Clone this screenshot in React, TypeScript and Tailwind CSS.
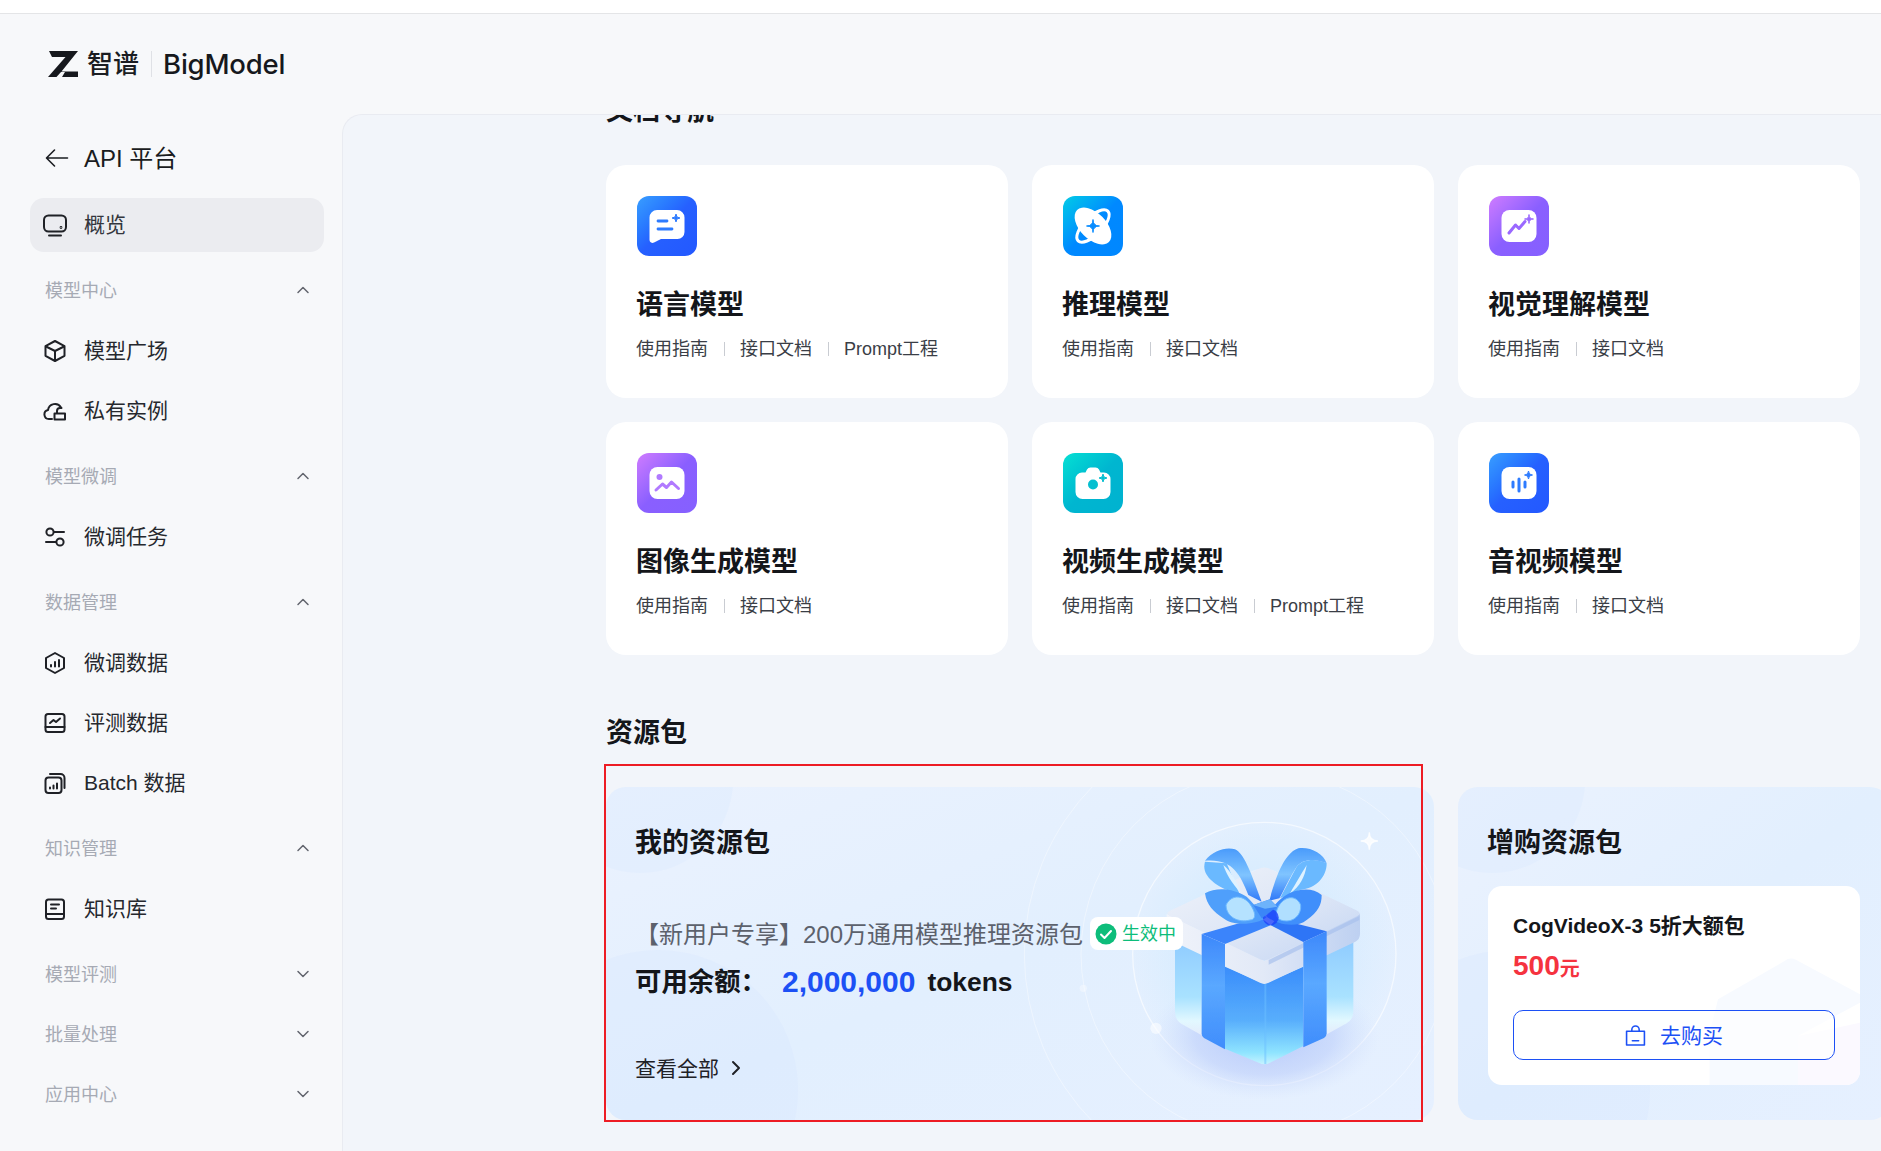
import { ChevronDown, ChevronRight, ChevronUp } from 'lucide-react';
import type { ReactNode } from 'react';

type NavItem = { label: string; icon: ReactNode };
type NavGroup = { title: string; open: boolean; items: NavItem[] };

function star(x: number, y: number, r: number) {
  return `M${x} ${y - r}Q${x} ${y} ${x + r} ${y}Q${x} ${y} ${x} ${y + r}Q${x} ${y} ${x - r} ${y}Q${x} ${y} ${x} ${y - r}Z`;
}

function NavIcon({ children }: { children: ReactNode }) {
  return (
    <svg viewBox="0 0 24 24" className="h-6 w-6 shrink-0" fill="none" stroke="#1f2126" strokeWidth="2" strokeLinecap="round" strokeLinejoin="round">
      {children}
    </svg>
  );
}

const groups: NavGroup[] = [
  {
    title: '模型中心',
    open: true,
    items: [
      {
        label: '模型广场',
        icon: (
          <NavIcon>
            <path d="M12 2 21.5 7.2v9.6L12 22l-9.5-5.2V7.2Z" />
            <path d="M3 7.5 12 12l9-4.5M12 12v9.5" />
          </NavIcon>
        )
      },
      {
        label: '私有实例',
        icon: (
          <NavIcon>
            <path d="M9 20H6a4.5 4.5 0 0 1-1-8.9A7 7 0 0 1 18 8.5" />
            <path d="M11.5 14.5H22v6H11.5zM14 14.5V12a3 3 0 0 1 3-3h1.5" />
          </NavIcon>
        )
      }
    ]
  },
  {
    title: '模型微调',
    open: true,
    items: [
      {
        label: '微调任务',
        icon: (
          <NavIcon>
            <circle cx="7" cy="7" r="3.6" />
            <circle cx="17" cy="17" r="3.6" />
            <path d="M11 7h10M3 17h10" />
          </NavIcon>
        )
      }
    ]
  },
  {
    title: '数据管理',
    open: true,
    items: [
      {
        label: '微调数据',
        icon: (
          <NavIcon>
            <path d="M12 2 21 7v10l-9 5-9-5V7Z" />
            <path d="M8 15.5V14M12 15.5V11M16 15.5V9" />
          </NavIcon>
        )
      },
      {
        label: '评测数据',
        icon: (
          <NavIcon>
            <rect x="2.5" y="3" width="19" height="18" rx="2.5" />
            <path d="M2.5 16h19M7 12l3.5-3 2.5 2 4-3.5" />
          </NavIcon>
        )
      },
      {
        label: 'Batch 数据',
        icon: (
          <NavIcon>
            <rect x="2.5" y="6.5" width="16" height="15.5" rx="3" />
            <path d="M7 3h10.5a4 4 0 0 1 4 4v10M7 17.5v-1M10.5 17.5v-3M14 17.5v-5" />
          </NavIcon>
        )
      }
    ]
  },
  {
    title: '知识管理',
    open: true,
    items: [
      {
        label: '知识库',
        icon: (
          <NavIcon>
            <rect x="3" y="2.5" width="18" height="19.5" rx="2.5" />
            <path d="M3 17h18M8 7.5h8M8 11.5h5" />
          </NavIcon>
        )
      }
    ]
  },
  { title: '模型评测', open: false, items: [] },
  { title: '批量处理', open: false, items: [] },
  { title: '应用中心', open: false, items: [] }
];

const docs = [
  {
    title: '语言模型',
    prompt: true,
    gradient: 'bg-linear-to-br from-[#3a9eff] via-[#2660ff] to-[#2358ff]',
    glyph: (
      <>
        <path d="M20 14h20a7.5 7.5 0 0 1 7.5 7.5V36a7 7 0 0 1-7 7H24l-7 3.5A3 3 0 0 1 12.5 44V21.5A7.5 7.5 0 0 1 20 14Z" fill="#fff" />
        <path d="M21 25h9M21 33h14" stroke="#2d7bff" strokeWidth="2.8" strokeLinecap="round" />
        <path d={star(39, 22, 4)} fill="#2d7bff" stroke="#2d7bff" strokeWidth="1" />
      </>
    )
  },
  {
    title: '推理模型',
    prompt: false,
    gradient: 'bg-linear-to-br from-[#12cbe5] via-[#0089ff] to-[#0087ff]',
    glyph: (
      <>
        <ellipse cx="30" cy="30" rx="21" ry="9" transform="rotate(-45 30 30)" fill="none" stroke="#fff" strokeWidth="3" />
        <ellipse cx="30" cy="30" rx="22.5" ry="13" transform="rotate(45 30 30)" fill="#fff" />
        <path d={star(30, 30, 6.5)} fill="#0a8dff" stroke="#0a8dff" strokeWidth="1" />
      </>
    )
  },
  {
    title: '视觉理解模型',
    prompt: false,
    gradient: 'bg-linear-to-br from-[#d07bff] via-[#8a5fff] to-[#8560ff]',
    glyph: (
      <>
        <rect x="12.5" y="14" width="35" height="32" rx="8" fill="#fff" />
        <path d="M20 37l6.5-8 3.5 3.5 6-7" fill="none" stroke="#9a68ff" strokeWidth="3" strokeLinecap="round" strokeLinejoin="round" />
        <path d={star(40, 23, 4.5)} fill="#9a68ff" stroke="#9a68ff" strokeWidth="1" />
      </>
    )
  },
  {
    title: '图像生成模型',
    prompt: false,
    gradient: 'bg-linear-to-br from-[#d07bff] via-[#8a5fff] to-[#8560ff]',
    glyph: (
      <>
        <rect x="12.5" y="14" width="35" height="32" rx="8" fill="#fff" />
        <circle cx="22.5" cy="24" r="3" fill="#b17aff" />
        <path d="M19 37l6.5-6 4 3.5 5-5.5 7 6.5" fill="none" stroke="#b17aff" strokeWidth="3" strokeLinecap="round" strokeLinejoin="round" />
      </>
    )
  },
  {
    title: '视频生成模型',
    prompt: true,
    gradient: 'bg-linear-to-br from-[#08e0d3] via-[#00b6d0] to-[#00b2d0]',
    glyph: (
      <>
        <path d="M19 19.5h3.5l1.5-3a4 4 0 0 1 3.500-2h5a4 4 0 0 1 3.500 2l1.500 3H41a6.500 6.500 0 0 1 6.500 6.500V39a7 7 0 0 1-7 7h-21a7 7 0 0 1-7-7V26A6.500 6.500 0 0 1 19 19.500Z" fill="#fff" />
        <circle cx="30" cy="31.5" r="5" fill="#06bfd0" />
        <path d={star(40, 25, 4)} fill="#06bfd0" stroke="#06bfd0" strokeWidth="1" />
      </>
    )
  },
  {
    title: '音视频模型',
    prompt: false,
    gradient: 'bg-linear-to-br from-[#3a9eff] via-[#2660ff] to-[#2358ff]',
    glyph: (
      <>
        <rect x="12.5" y="14" width="35" height="32" rx="8" fill="#fff" />
        <path d="M24 29v5M30 26v12M36 29v5" stroke="#2d7bff" strokeWidth="3" strokeLinecap="round" />
        <path d={star(39.5, 22, 4)} fill="#2d7bff" stroke="#2d7bff" strokeWidth="1" />
      </>
    )
  }
];

function Logo() {
  return (
    <div className="flex h-[100px] items-center pl-[48px]">
      <svg viewBox="0 0 30 26" className="h-[26px] w-[30px]" fill="#16181d">
        <path d="M1 0H30L13.500 20.500H30V26H0L17.500 6H4Z" />
        <path d="M8.500 26 13 21H17L14 26Z" fill="#f7f8fa" />
      </svg>
      <span className="ml-[9px] text-[26px] leading-none font-medium text-[#1b1d22]">智谱</span>
      <span className="ml-[12px] h-[26px] w-px bg-[#dfe1e6]" />
      <span className="mt-[2px] ml-[11px] font-['Inter',sans-serif] text-[27.5px] leading-none font-medium tracking-[-0.2px] text-[#16181d]">BigModel</span>
    </div>
  );
}

function Sidebar() {
  return (
    <aside className="w-[342px] shrink-0 pt-[14px] pl-[30px]">
      <div className="flex h-[60px] w-[294px] items-center">
        <svg viewBox="0 0 24 20" className="ml-[15px] h-[20px] w-[24px]" fill="none" stroke="#1a1c21" strokeWidth="1.6" strokeLinecap="round" strokeLinejoin="round">
          <path d="M22.500 10H2M9.500 2 1.500 10l8 8" />
        </svg>
        <span className="mt-[2px] ml-[15px] text-[24px] leading-none text-[#1a1c21]">API 平台</span>
      </div>
      <div className="mt-[10px] flex h-[54px] w-[294px] items-center rounded-[14px] bg-[#ebecf0] pl-[13px]">
        <NavIcon>
          <rect x="1" y="2.5" width="22" height="16" rx="4.5" />
          <path d="M6 22.500h12" />
          <circle cx="18" cy="14.5" r=".4" />
        </NavIcon>
        <span className="mb-[2px] ml-[17px] text-[21px] leading-none text-[#33363d]">概览</span>
      </div>
      <div className="mt-[8px] w-[294px]">
        {groups.map((group) => (
          <div key={group.title} className={group.open ? 'mb-[6px]' : ''}>
            <div className="flex h-[60px] items-center justify-between pr-[11px] pl-[15px]">
              <span className="mt-[2px] text-[18px] leading-none text-[#a6aab4]">{group.title}</span>
              {group.open ? (
                <ChevronUp size={20} strokeWidth={1.8} className="text-[#62656e]" />
              ) : (
                <ChevronDown size={20} strokeWidth={1.8} className="text-[#62656e]" />
              )}
            </div>
            {group.open
              ? group.items.map((item) => (
                  <div key={item.label} className="flex h-[60px] items-center pl-[13px]">
                    <div className="mt-[2px]">{item.icon}</div>
                    <span className="ml-[17px] text-[21px] leading-none text-[#26282e]">{item.label}</span>
                  </div>
                ))
              : null}
          </div>
        ))}
      </div>
    </aside>
  );
}

function DocCard({ doc }: { doc: (typeof docs)[number] }) {
  return (
    <div className="h-[233px] rounded-[20px] bg-white pt-[31px] pl-[31px]">
      <div className={`h-[60px] w-[60px] rounded-[12px] ${doc.gradient}`}>
        <svg viewBox="0 0 60 60" className="h-[60px] w-[60px]">
          {doc.glyph}
        </svg>
      </div>
      <h3 className="mt-[31px] ml-[-1px] h-[36px] text-[27px] leading-[36px] font-bold text-[#14161a]">{doc.title}</h3>
      <div className="mt-[13px] ml-[-1px] flex h-[26px] items-center text-[18px] leading-none text-[#3a3e46]">
        <span>使用指南</span>
        <span className="mx-[15.5px] h-[14px] w-px bg-[#c9ccd2]" />
        <span>接口文档</span>
        {doc.prompt ? (
          <>
            <span className="mx-[15.5px] h-[14px] w-px bg-[#c9ccd2]" />
            <span>Prompt工程</span>
          </>
        ) : null}
      </div>
    </div>
  );
}

function CardDecor() {
  return (
    <>
      <div className="absolute top-[-100px] left-[-59px] h-[186px] w-[186px] rounded-full bg-[#d6e8ff]/30" />
      <div className="absolute top-[163px] left-[-88px] h-[280px] w-[280px] rounded-full bg-[#d2e5ff]/25" />
    </>
  );
}

function Gift() {
  return (
    <svg viewBox="0 0 1110 1173" className="absolute top-[-27px] left-[474px] h-[391px] w-[370px] overflow-visible" fill="none">
      <defs>
        <radialGradient id="halo" cx="50%" cy="50%" r="50%">
          <stop offset="0%" stopColor="#c8e8ff" stopOpacity=".9" />
          <stop offset="100%" stopColor="#c8e8ff" stopOpacity="0" />
        </radialGradient>
        <radialGradient id="shade" cx="50%" cy="50%" r="50%">
          <stop offset="0%" stopColor="#b4c6fa" stopOpacity=".95" />
          <stop offset="60%" stopColor="#c3d3fb" stopOpacity=".7" />
          <stop offset="100%" stopColor="#d4e2fd" stopOpacity="0" />
        </radialGradient>
        <linearGradient id="core" x1="0" y1="0" x2="0" y2="1">
          <stop offset="0%" stopColor="#3a8dfb" />
          <stop offset="55%" stopColor="#58aefc" />
          <stop offset="88%" stopColor="#8fe4ff" />
          <stop offset="100%" stopColor="#c5f3ff" />
        </linearGradient>
        <linearGradient id="glass" x1="0" y1="0" x2="0" y2="1">
          <stop offset="0%" stopColor="#8fcbff" />
          <stop offset="60%" stopColor="#a9e2ff" />
          <stop offset="85%" stopColor="#e2f8ff" />
          <stop offset="100%" stopColor="#e4ebfb" />
        </linearGradient>
        <linearGradient id="lid" x1="0" y1="0" x2="1" y2="1">
          <stop offset="0%" stopColor="#f0f3fa" />
          <stop offset="55%" stopColor="#dde6f6" />
          <stop offset="100%" stopColor="#c2d4f3" />
        </linearGradient>
        <linearGradient id="lidSide" x1="0" y1="0" x2="1" y2="0">
          <stop offset="0%" stopColor="#f0f3fa" />
          <stop offset="50%" stopColor="#e2e9f7" />
          <stop offset="100%" stopColor="#bdd0f1" />
        </linearGradient>
        <linearGradient id="band" x1="0" y1="0" x2="0" y2="1">
          <stop offset="0%" stopColor="#3d88fb" />
          <stop offset="45%" stopColor="#5aa8ff" />
          <stop offset="100%" stopColor="#3f8dfc" />
        </linearGradient>
        <linearGradient id="bow" x1="0" y1="0" x2="0" y2="1">
          <stop offset="0%" stopColor="#4a9bfb" />
          <stop offset="50%" stopColor="#7fc4ff" />
          <stop offset="100%" stopColor="#2f78f8" />
        </linearGradient>
        <filter id="soft" x="-10%" y="-10%" width="120%" height="120%">
          <feGaussianBlur stdDeviation="1.5" />
        </filter>
      </defs>
      <circle cx="553" cy="582" r="720" stroke="#fff" strokeOpacity=".4" strokeWidth="3" />
      <circle cx="553" cy="582" r="550" stroke="#fff" strokeOpacity=".4" strokeWidth="3" />
      <circle cx="553" cy="582" r="395" fill="url(#halo)" stroke="#fff" strokeOpacity=".6" strokeWidth="4" />
      <ellipse cx="553" cy="830" rx="345" ry="190" fill="url(#shade)" />
      <path d={star(868, 243, 26)} fill="#fff" fillOpacity=".8" stroke="#fff" strokeOpacity=".8" strokeWidth="4" />
      <circle cx="228" cy="805" r="17" fill="#fff" fillOpacity=".55" />
      <circle cx="10" cy="685" r="11" fill="#fff" fillOpacity=".35" />
      <path d="M490 360Q500 328 550 326Q600 328 612 360L630 440H475Z" fill="#eef4fd" fillOpacity=".75" />

      <g filter="url(#soft)">
        {/* box body */}
        <path d="M285 540V755Q285 780 305 792L365 826V560Z" fill="url(#glass)" />
        <path d="M820 540V755Q820 778 800 790L738 824V560Z" fill="url(#glass)" />
        <path d="M435 620 553 672 670 620V858L570 908Q553 918 536 908L435 866Z" fill="url(#core)" />
        <path d="M556 672V912" stroke="#6cc0ff" strokeOpacity=".5" strokeWidth="6" />

        {/* lid */}
        <path d="M260 462V518Q260 535 275 542L540 668Q553 674 566 668L826 545Q840 538 840 522V462L553 602Z" fill="url(#lidSide)" />
        <path d="M270 452 540 325Q553 320 566 325L832 452Q846 460 832 468L566 598Q553 604 540 598L270 468Q254 460 270 452Z" fill="url(#lid)" />
        <path d="M566 600 838 468 838 480 566 614Z" fill="#a8c0ec" fillOpacity=".7" />

        {/* ribbon */}
        <path d="M365 522 540 472 572 496 435 552Z" fill="#3a84fb" />
        <path d="M572 496 590 476 740 514 670 546Z" fill="#2f74f6" />
        <path d="M365 522 435 552V868L372 834Q365 830 365 822Z" fill="url(#band)" />
        <path d="M670 546 740 514V820Q740 830 732 834L670 862Z" fill="url(#band)" />
      </g>

      {/* bow, drawn in the crop coordinates of the ribbon */}
      <g transform="translate(330 210)" filter="url(#soft)">
        <path d="M45 95C35 130 60 165 150 195L110 100Z" fill="#6ab9ff" />
        <path d="M100 105C125 125 145 165 152 188C125 160 108 130 100 105Z" fill="#dff2ff" />
        <path d="M45 92C70 60 110 50 135 58C165 70 190 150 215 215L175 195C150 130 125 85 45 92Z" fill="url(#bow)" />
        <path d="M410 100C410 140 380 175 330 180L270 205 320 110C340 85 380 85 410 100Z" fill="#6ab9ff" />
        <path d="M350 105C335 130 320 155 300 190C330 170 345 140 350 105Z" fill="#dff2ff" />
        <path d="M238 212C255 150 280 70 325 55C360 50 400 70 410 100C375 85 340 85 320 110C300 140 280 185 268 205Z" fill="url(#bow)" />
        <path d="M45 190C80 170 130 175 170 200C195 225 215 250 230 262C200 285 130 290 100 265C70 245 50 225 45 190Z" fill="#4f9ffb" />
        <path d="M108 225C125 190 165 195 185 230C200 255 195 270 180 270C145 280 108 260 108 225Z" fill="#b5e2ff" stroke="#6db9ff" strokeWidth="3" />
        <path d="M395 195C365 170 320 175 280 200C255 220 240 245 228 258C260 285 320 295 350 270C385 245 395 225 395 195Z" fill="#3f8ffb" />
        <path d="M332 225C320 195 285 195 265 230C250 258 265 270 280 272C310 278 335 255 332 225Z" fill="#b0dfff" stroke="#6db9ff" strokeWidth="3" />
        <circle cx="242" cy="262" r="24" fill="#1a3cfb" fillOpacity=".75" />
        <path d="M190 225 240 208 262 230 215 265Z" fill="#3a86f7" />
        <path d="M190 225 240 208 262 230 225 236Z" fill="#6db3fb" />
      </g>
    </svg>
  );
}

function MyPack() {
  return (
    <div className="relative h-[333px] w-[828px] shrink-0">
      <div className="relative h-full overflow-hidden rounded-[20px] bg-linear-to-br from-[#ebf2fe] via-[#e2effe] to-[#e6f0ff]">
        <CardDecor />
        <Gift />
      </div>
      <div className="absolute inset-0 px-[29px] pt-[38px]">
        <h3 className="h-[36px] text-[27px] leading-[36px] font-bold text-[#14161a]">我的资源包</h3>
        <div className="mt-[56px] flex h-[36px] items-center">
          <span className="text-[24px] leading-none whitespace-nowrap text-[#5c616c]">【新用户专享】200万通用模型推理资源包</span>
          <span className="mb-[3px] ml-[7px] flex h-[33px] w-[93px] shrink-0 items-center rounded-[8px] bg-white pl-[5px]">
            <svg viewBox="0 0 22 22" className="h-[22px] w-[22px]">
              <circle cx="11" cy="11" r="10.5" fill="#0dbd7a" />
              <path d="M6 11.500l3.500 3.500L16 8" fill="none" stroke="#fff" strokeWidth="2" strokeLinecap="round" strokeLinejoin="round" />
            </svg>
            <span className="ml-[5px] text-[18px] leading-none text-[#0dbd7a]">生效中</span>
          </span>
        </div>
        <div className="mt-[11px] flex h-[36px] items-center font-bold text-[#14161a]">
          <span className="text-[26.4px] leading-none">可用余额：</span>
          <span className="ml-[15px] text-[30px] leading-none text-[#1c50f5]">2,000,000</span>
          <span className="ml-[12px] text-[26.4px] leading-none">tokens</span>
        </div>
        <div className="mt-[53px] flex h-[30px] items-center text-[21px] leading-none text-[#1f2126]">
          查看全部
          <ChevronRight size={24} strokeWidth={2} className="ml-[5px]" />
        </div>
      </div>
      <div className="pointer-events-none absolute top-[-23px] left-[-2px] h-[358px] w-[819px] border-2 border-[#ed1c24]" />
    </div>
  );
}

function BuyPack() {
  return (
    <div className="relative h-[333px] w-[432px] shrink-0 overflow-hidden rounded-[20px] bg-linear-to-br from-[#ebf2fe] via-[#e2effe] to-[#e6f0ff] px-[30px] pt-[38px]">
      <CardDecor />
      <h3 className="relative ml-[-1px] h-[36px] text-[27px] leading-[36px] font-bold text-[#14161a]">增购资源包</h3>
      <div className="relative mt-[25px] h-[199px] w-[372px] overflow-hidden rounded-[14px] bg-white px-[25px] pt-[25px]">
        <svg viewBox="0 0 1116 597" className="absolute inset-0 h-full w-full">
          <path d="M690 340 890 225Q905 212 925 222L1116 325V350L930 450V597H665V440Z" fill="#f7faff" />
          <path d="M930 450 1116 410V597H930Z" fill="#fbf9ff" />
        </svg>
        <div className="relative h-[30px] text-[21px] leading-[30px] font-bold text-[#14161a]">CogVideoX-3 5折大额包</div>
        <div className="relative mt-[7px] flex h-[36px] items-end font-bold text-[#f5333f]">
          <span className="text-[28px] leading-[36px]">500</span>
          <span className="mb-[3px] text-[20px] leading-[24px]">元</span>
        </div>
        <div className="relative mt-[26px] flex h-[50px] w-[322px] items-center justify-center rounded-[10px] border-[1.5px] border-[#1c50f5] bg-white/60 text-[#1c50f5]">
          <svg viewBox="0 0 20 20" className="h-[21px] w-[21px]" fill="none" stroke="#1c50f5" strokeWidth="1.5" strokeLinejoin="round" strokeLinecap="round">
            <path d="M1.500 6h17v13h-17ZM6.500 6V4.500a3.500 3.500 0 0 1 7 0V6M7 15h6" />
          </svg>
          <span className="ml-[14px] text-[21px] leading-none">去购买</span>
        </div>
      </div>
    </div>
  );
}

export default function App() {
  return (
    <div className="flex h-[1151px] w-[1881px] flex-col overflow-hidden bg-[#f7f8fa] font-['Liberation_Sans','Noto_Sans_CJK_SC',sans-serif]">
      <div className="h-[14px] shrink-0 border-b border-[#e4e5e7] bg-white" />
      <Logo />
      <div className="flex min-h-0 flex-1">
        <Sidebar />
        <main className="min-w-0 flex-1 overflow-hidden rounded-tl-[20px] border-t border-l border-[#e9ebf1] bg-[#f2f5fa] pl-[263px]">
          <h2 className="mt-[-22px] h-[36px] text-[27px] leading-[36px] font-bold text-[#14161a]">文档导航</h2>
          <div className="mt-[36px] grid w-[1254px] grid-cols-3 gap-[24px]">
            {docs.map((doc) => (
              <DocCard key={doc.title} doc={doc} />
            ))}
          </div>
          <h2 className="mt-[60px] h-[36px] text-[27px] leading-[36px] font-bold text-[#14161a]">资源包</h2>
          <div className="mt-[36px] flex gap-[24px]">
            <MyPack />
            <BuyPack />
          </div>
        </main>
      </div>
    </div>
  );
}
